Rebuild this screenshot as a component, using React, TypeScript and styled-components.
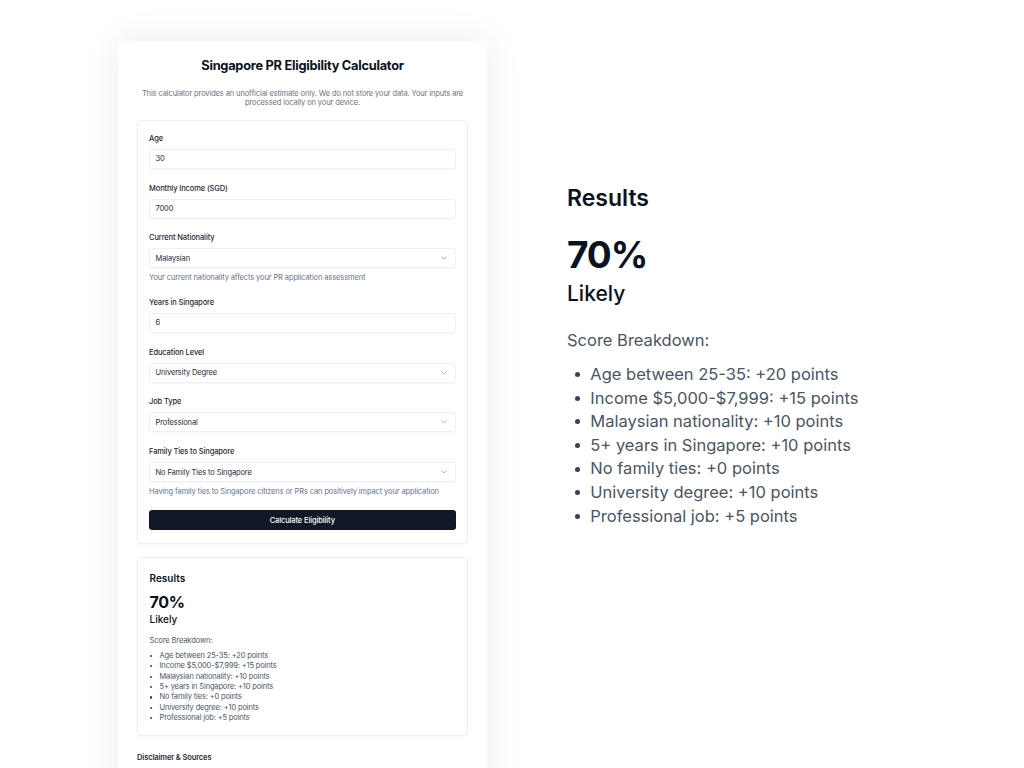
import * as React from "react";
import styled, { createGlobalStyle } from "styled-components";

const GlobalStyle = createGlobalStyle`
  html, body {
    margin: 0;
    height: 768px;
    overflow: hidden;
    background: #ffffff;
    font-family: Inter, "Noto Sans", "Liberation Sans", sans-serif;
    color: #111827;
  }
  * { box-sizing: border-box; }
`;

const Page = styled.div`
  display: flex;
  align-items: flex-start;
  gap: 80px;
  padding-left: 118px;
`;

const Panel = styled.div`
  width: 369px;
  margin-top: 41px;
  padding: 16px 19px 60px;
  background: #ffffff;
  box-shadow: 0 0 36px rgba(15, 23, 42, 0.08);
`;

const Title = styled.h1`
  margin: 0;
  font-size: 12.8px;
  line-height: 18px;
  font-weight: 700;
  letter-spacing: -0.02em;
  text-align: center;
  color: #0b1220;
`;

const Intro = styled.p`
  margin: 13.5px 0 0;
  font-size: 7.5px;
  line-height: 9.7px;
  letter-spacing: -0.016em;
  text-align: center;
  color: #6b7280;
`;

const Card = styled.div`
  border: 1px solid #eceef1;
  border-radius: 4px;
  box-shadow: 0 1px 2px rgba(15, 23, 42, 0.04);
  background: #ffffff;
`;

const FormCard = styled(Card)`
  margin-top: 12px;
  display: flex;
  flex-direction: column;
  gap: 14.7px;
  padding: 13px 11.5px 12.5px 11px;
`;

const Field = styled.div`
  display: flex;
  flex-direction: column;
`;

const Label = styled.label`
  font-size: 7.5px;
  line-height: 10px;
  font-weight: 500;
  letter-spacing: -0.016em;
  color: #1f2937;
  margin-bottom: 5px;
`;

const Control = styled.div`
  display: flex;
  align-items: center;
  justify-content: space-between;
  height: 20px;
  padding: 0 8px 0 5.5px;
  border: 1px solid #eef0f3;
  border-radius: 3px;
  box-shadow: 0 1px 1px rgba(15, 23, 42, 0.03);
  font-size: 7.5px;
  letter-spacing: -0.016em;
  color: #1f2937;
`;

const Hint = styled.div`
  margin-top: 5px;
  font-size: 7.5px;
  line-height: 10px;
  letter-spacing: -0.016em;
  color: #64748b;
`;

const SubmitButton = styled.button`
  margin-top: -2px;
  height: 20.6px;
  border: 0;
  border-radius: 3px;
  background: #111827;
  color: #ffffff;
  font-family: inherit;
  font-size: 7.5px;
  font-weight: 500;
  letter-spacing: -0.016em;
`;

const ResultsCard = styled(Card)`
  margin-top: 13px;
  padding: 13px 12px 11px 11.5px;
`;

const Disclaimer = styled.div`
  margin-top: 17px;
  font-size: 7.5px;
  line-height: 10px;
  font-weight: 600;
  letter-spacing: -0.016em;
  color: #1f2937;
`;

const SideColumn = styled.div`
  padding-top: 184px;
`;

type Size = "sm" | "lg";

// the same results block, shown small inside the calculator and large beside it
const dims = {
  sm: {
    head: 10, headLh: 14,
    pct: 16, pctLh: 20, pctMt: 7.4, pctLs: -0.02,
    likely: 10, likelyLh: 12, likelyMt: 0.5,
    sub: 7.5, subLh: 10, subMt: 11, subLs: -0.016,
    item: 7.5, itemLh: 10.4, listMt: 5, itemLs: -0.02,
    dot: 2.2, dotLeft: 0.4, textLeft: 10,
  },
  lg: {
    head: 23, headLh: 28,
    pct: 37, pctLh: 44, pctMt: 20.7, pctLs: -0.03,
    likely: 21, likelyLh: 28, likelyMt: 3,
    sub: 16.5, subLh: 22, subMt: 21, subLs: 0,
    item: 16.5, itemLh: 23.6, listMt: 12.3, itemLs: 0,
    dot: 5, dotLeft: 8.2, textLeft: 23.3,
  },
};

const Heading = styled.h2<{ $size: Size }>`
  margin: 0;
  font-size: ${(p) => dims[p.$size].head}px;
  line-height: ${(p) => dims[p.$size].headLh}px;
  font-weight: 600;
  color: #0b1220;
`;

const Percent = styled.div<{ $size: Size }>`
  margin-top: ${(p) => dims[p.$size].pctMt}px;
  font-size: ${(p) => dims[p.$size].pct}px;
  line-height: ${(p) => dims[p.$size].pctLh}px;
  letter-spacing: ${(p) => dims[p.$size].pctLs}em;
  font-weight: 700;
  color: #0b1220;
`;

const Verdict = styled.div<{ $size: Size }>`
  margin-top: ${(p) => dims[p.$size].likelyMt}px;
  font-size: ${(p) => dims[p.$size].likely}px;
  line-height: ${(p) => dims[p.$size].likelyLh}px;
  font-weight: 500;
  color: #0b1220;
`;

const Breakdown = styled.div<{ $size: Size }>`
  margin-top: ${(p) => dims[p.$size].subMt}px;
  font-size: ${(p) => dims[p.$size].sub}px;
  line-height: ${(p) => dims[p.$size].subLh}px;
  letter-spacing: ${(p) => dims[p.$size].subLs}em;
  color: #4b5563;
`;

const ScoreList = styled.ul<{ $size: Size }>`
  margin: ${(p) => dims[p.$size].listMt}px 0 0;
  padding: 0;
  list-style: none;
`;

const ScoreItem = styled.li<{ $size: Size }>`
  position: relative;
  padding-left: ${(p) => dims[p.$size].textLeft}px;
  font-size: ${(p) => dims[p.$size].item}px;
  line-height: ${(p) => dims[p.$size].itemLh}px;
  letter-spacing: ${(p) => dims[p.$size].itemLs}em;
  color: #4b5563;
  white-space: nowrap;

  &::before {
    content: "";
    position: absolute;
    left: ${(p) => dims[p.$size].dotLeft}px;
    top: 50%;
    width: ${(p) => dims[p.$size].dot}px;
    height: ${(p) => dims[p.$size].dot}px;
    margin-top: ${(p) => -dims[p.$size].dot / 2}px;
    border-radius: 50%;
    background: #374151;
  }
`;

const scores = [
  "Age between 25-35: +20 points",
  "Income $5,000-$7,999: +15 points",
  "Malaysian nationality: +10 points",
  "5+ years in Singapore: +10 points",
  "No family ties: +0 points",
  "University degree: +10 points",
  "Professional job: +5 points",
];

function ResultsView({ size }: { size: Size }) {
  return (
    <>
      <Heading $size={size}>Results</Heading>
      <Percent $size={size}>70%</Percent>
      <Verdict $size={size}>Likely</Verdict>
      <Breakdown $size={size}>Score Breakdown:</Breakdown>
      <ScoreList $size={size}>
        {scores.map((s) => (
          <ScoreItem key={s} $size={size}>
            {s}
          </ScoreItem>
        ))}
      </ScoreList>
    </>
  );
}

function Chevron() {
  return (
    <svg width="6" height="4" viewBox="0 0 6 4" fill="none">
      <path d="M0.8 0.9 L3 3 L5.2 0.9" stroke="#9ca3af" strokeWidth="0.8" strokeLinecap="round" strokeLinejoin="round" />
    </svg>
  );
}

function InputField({ label, value, select, hint }: { label: string; value: string; select?: boolean; hint?: string }) {
  return (
    <Field>
      <Label>{label}</Label>
      <Control>
        <span>{value}</span>
        {select && <Chevron />}
      </Control>
      {hint && <Hint>{hint}</Hint>}
    </Field>
  );
}

export default function App() {
  return (
    <>
      <GlobalStyle />
      <Page>
        <Panel>
          <Title>Singapore PR Eligibility Calculator</Title>
          <Intro>
            This calculator provides an unofficial estimate only. We do not store your data. Your inputs are
            <br />
            processed locally on your device.
          </Intro>
          <FormCard>
            <InputField label="Age" value="30" />
            <InputField label="Monthly Income (SGD)" value="7000" />
            <InputField
              label="Current Nationality"
              value="Malaysian"
              select
              hint="Your current nationality affects your PR application assessment"
            />
            <InputField label="Years in Singapore" value="6" />
            <InputField label="Education Level" value="University Degree" select />
            <InputField label="Job Type" value="Professional" select />
            <InputField
              label="Family Ties to Singapore"
              value="No Family Ties to Singapore"
              select
              hint="Having family ties to Singapore citizens or PRs can positively impact your application"
            />
            <SubmitButton>Calculate Eligibility</SubmitButton>
          </FormCard>
          <ResultsCard>
            <ResultsView size="sm" />
          </ResultsCard>
          <Disclaimer>Disclaimer &amp; Sources</Disclaimer>
        </Panel>
        <SideColumn>
          <ResultsView size="lg" />
        </SideColumn>
      </Page>
    </>
  );
}
